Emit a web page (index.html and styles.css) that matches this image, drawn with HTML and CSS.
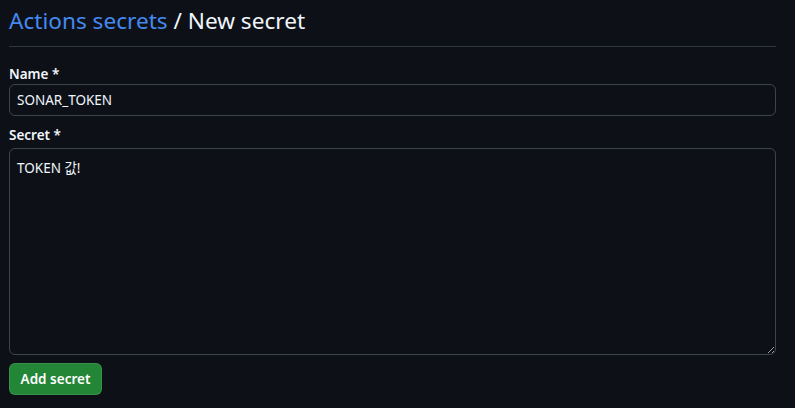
FILE: index.html
```html
<!DOCTYPE html>
<html lang="ko">
<head>
<meta charset="utf-8">
<link rel="stylesheet" href="styles.css">
</head>
<body>
<main class="page">
  <h1 class="title"><a class="title-link" href="#">Actions secrets</a> / New secret</h1>
  <form class="form">
    <div class="field">
      <label class="label">Name *</label>
      <input class="input" type="text" value="SONAR_TOKEN">
    </div>
    <div class="field field-secret">
      <label class="label">Secret *</label>
      <textarea class="textarea">TOKEN 값!</textarea>
    </div>
    <button class="btn" type="button">Add secret</button>
  </form>
</main>
</body>
</html>
```
FILE: styles.css
```css
html, body {
  margin: 0;
  padding: 0;
  background: #0d1117;
}
body {
  font-family: "Noto Sans", "Noto Sans CJK KR", sans-serif;
  color: #f0f6fc;
  font-size: 14px;
}
.page {
  width: 767px;
  padding: 3px 0 0 9px;
}
.title {
  margin: 0;
  font-size: 22.6px;
  font-weight: 400;
  line-height: 36px;
  padding-bottom: 7px;
  border-bottom: 1px solid #30363d;
  color: #f0f6fc;
}
.title-link {
  color: #4589f0;
  text-decoration: none;
}
.form {
  display: flex;
  flex-direction: column;
  padding-top: 17px;
}
.field {
  display: flex;
  flex-direction: column;
  margin-bottom: 9px;
}
.label {
  font-weight: 600;
  font-size: 13.5px;
  line-height: 20px;
  margin-bottom: 0;
}
.field-secret {
  margin-bottom: 6px;
}
.field-secret .label {
  margin-bottom: 3px;
}
.input, .textarea {
  box-sizing: border-box;
  width: 100%;
  background: #0d1117;
  border: 1px solid #3d444d;
  border-radius: 6px;
  color: #f0f6fc;
  font-family: "Noto Sans", "Noto Sans CJK KR", sans-serif;
  font-size: 13.5px;
  padding: 5px 7px;
  margin: 0;
}
.input {
  height: 32px;
}
.textarea {
  height: 207px;
  line-height: 20px;
  padding: 9px 7px;
  resize: vertical;
}
.btn {
  align-self: flex-start;
  box-sizing: border-box;
  height: 32px;
  width: 93px;
  margin-top: 2px;
  background: #238636;
  border: 1px solid rgba(240,246,252,0.1);
  border-radius: 6px;
  color: #ffffff;
  font-family: "Noto Sans", sans-serif;
  font-weight: 600;
  font-size: 13.5px;
  padding: 0;
  white-space: nowrap;
}
```
